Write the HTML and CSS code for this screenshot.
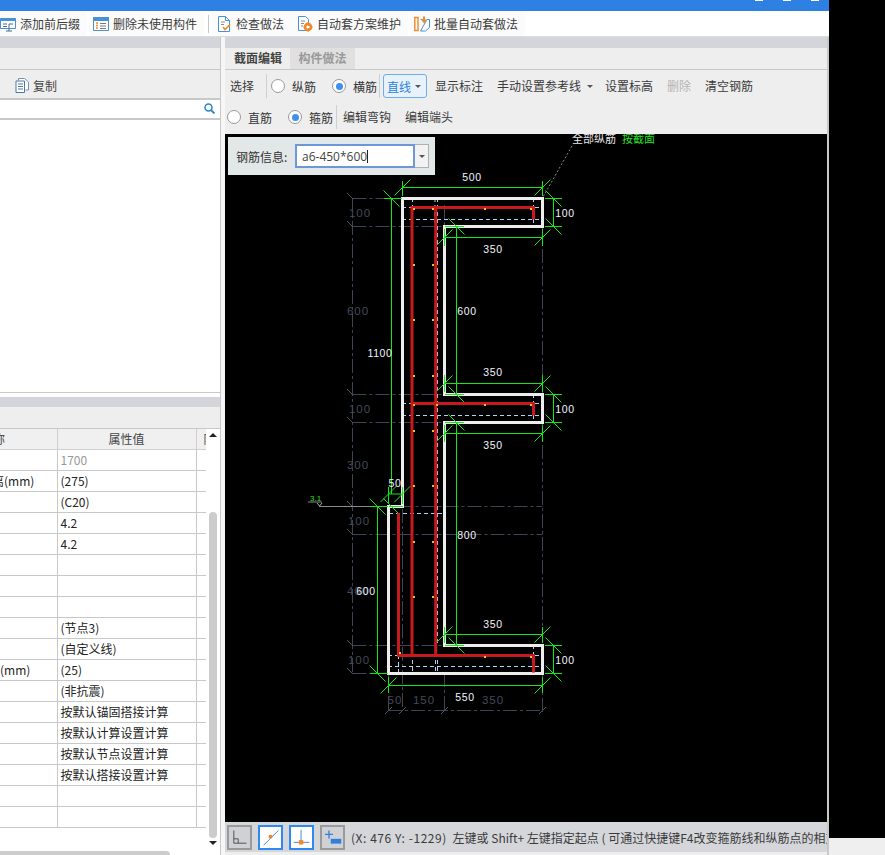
FILE: index.html
```html
<!DOCTYPE html>
<html lang="zh">
<head>
<meta charset="utf-8">
<title>截面编辑</title>
<link rel="stylesheet" href="styles.css">
</head>
<body>
<div class="page">
<div class="app">
  <div class="titlebar"><i class="ctl"></i><i class="ctl"></i><i class="ctl"></i></div>
  <div class="toolbar">
    <div class="tool first">
      <svg class="ti" viewBox="0 0 16 16"><path d="M.5 2.500h15v10H.5z" fill="#fff" stroke="#4a90d9"/><path d="M.5 2h15v3H.5z" fill="#4a90d9"/><path d="M3 8h4M3 10.500h4M9 8h4M9 8v7M6 15h6" fill="none" stroke="#4a6a8a"/></svg>
      <span>添加前后缀</span>
    </div>
    <div class="tool">
      <svg class="ti" viewBox="0 0 16 16"><path d="M.5 1.500h15v13H.5z" fill="#fff" stroke="#4a90d9"/><path d="M0 1h16v4H0z" fill="#4a90d9"/><path d="M3 7h2M3 9.500h2M3 12h2" stroke="#ee8a2a" stroke-width="1.500"/><path d="M7 7.500h6M7 10h6M7 12.500h6" stroke="#778"/></svg>
      <span>删除未使用构件</span>
    </div>
    <i class="vsep"></i>
    <div class="tool narrow">
      <svg class="ti" viewBox="0 0 16 16"><path d="M2.500.5h7l4 4v11h-11z" fill="#fff" stroke="#4a90d9"/><path d="M9.500.5v4h4" fill="none" stroke="#4a90d9"/><path d="M5 6h4M5 8.500h3" stroke="#889"/><path d="M7 11l2 2.500 5-5" fill="none" stroke="#ee8a2a" stroke-width="1.600"/></svg>
      <span>检查做法</span>
    </div>
    <div class="tool">
      <svg class="ti" viewBox="0 0 16 16"><path d="M1.500.5h7l3 3v11h-10z" fill="#fff" stroke="#4a90d9"/><path d="M4 5h4M4 7.500h3M4 10h2" stroke="#889"/><circle cx="11" cy="11" r="3.200" fill="none" stroke="#ee8a2a" stroke-width="2.400"/><path d="M11 6.500v9M6.500 11h9M8 8l6 6M14 8l-6 6" stroke="#ee8a2a" stroke-width="1"/><circle cx="11" cy="11" r="1.300" fill="#fff"/></svg>
      <span>自动套方案维护</span>
    </div>
    <div class="tool gapped">
      <svg class="ti" viewBox="0 0 16 16"><path d="M4 1.500H.8v13H4M4 .8v14.500" fill="none" stroke="#ee8a2a" stroke-width="1.400"/><path d="M6.500 3.500h2M13 3.500h2.500v8l-4 3.500h-5z" fill="#fff" stroke="#4a90d9"/><path d="M9 .5h2v3h2l-3 4-3-4h2z" fill="#ee8a2a"/></svg>
      <span>批量自动套做法</span>
    </div>
  </div>
  <div class="main">
    <div class="left">
      <div class="band"></div>
      <div class="lhead"></div>
      <div class="lcopy">
        <svg class="copy-i" viewBox="0 0 14 15"><path d="M3.500 2.500V.5h6l4 3.500v8h-3" fill="#fff" stroke="#7a93ad"/><path d="M1 3h8.500v11.500H1z" fill="#fff" stroke="#4a78a8"/><path d="M3 6h5M3 8.500h5M3 11h5" stroke="#4a78a8"/></svg>
        <span>复制</span>
      </div>
      <div class="search">
        <svg class="search-i" viewBox="0 0 11 11"><circle cx="4.500" cy="4.500" r="3.500" fill="none" stroke="#2a85c8" stroke-width="1.500"/><path d="M7 7l3.500 3.500" stroke="#2a85c8" stroke-width="1.800"/></svg>
      </div>
      <div class="list"></div>
      <div class="band low"></div>
      <div class="lhead short"></div>
      <div class="props">
        <div class="tbl-view">
          <table class="tbl">
            <colgroup><col class="c1"><col class="c2"><col class="c3"></colgroup>
            <thead><tr><th class="h">属性名称</th><th>属性值</th><th class="extra">附加</th></tr></thead>
            <tbody>
              <tr><td></td><td class="muted">1700</td><td></td></tr>
              <tr><td class="nm cut">离(mm)</td><td>(275)</td><td></td></tr>
              <tr><td></td><td>(C20)</td><td></td></tr>
              <tr><td></td><td>4.2</td><td></td></tr>
              <tr><td></td><td>4.2</td><td></td></tr>
              <tr><td></td><td></td><td></td></tr>
              <tr><td></td><td></td><td></td></tr>
              <tr><td></td><td></td><td></td></tr>
              <tr><td></td><td>(节点3)</td><td></td></tr>
              <tr><td></td><td>(自定义线)</td><td></td></tr>
              <tr><td class="nm">(mm)</td><td>(25)</td><td></td></tr>
              <tr><td></td><td>(非抗震)</td><td></td></tr>
              <tr><td></td><td>按默认锚固搭接计算</td><td></td></tr>
              <tr><td></td><td>按默认计算设置计算</td><td></td></tr>
              <tr><td></td><td>按默认节点设置计算</td><td></td></tr>
              <tr><td></td><td>按默认搭接设置计算</td><td></td></tr>
              <tr><td></td><td></td><td></td></tr>
              <tr><td></td><td></td><td></td></tr>
            </tbody>
          </table>
          <div class="hscroll"></div>
        </div>
        <div class="vscroll">
          <i class="arrow up"></i>
          <div class="thumb"></div>
          <i class="arrow down"></i>
        </div>
      </div>
    </div>
    <div class="gutter"></div>
    <div class="right">
      <div class="band"></div>
      <div class="tabs">
        <div class="tab on">截面编辑</div>
        <div class="tab">构件做法</div>
      </div>
      <div class="row r1">
        <span class="txt">选择</span>
        <i class="sep s1"></i>
        <label class="opt o1"><i class="radio"></i><span>纵筋</span></label>
        <label class="opt o2"><i class="radio sel"></i><span>横筋</span></label>
        <i class="sep s2"></i>
        <div class="linebtn"><span>直线</span><i class="caret"></i></div>
        <span class="txt m8">显示标注</span>
        <span class="txt m14">手动设置参考线</span><i class="caret c5"></i>
        <span class="txt m12">设置标高</span>
        <span class="txt m14 off">删除</span>
        <span class="txt m14">清空钢筋</span>
      </div>
      <div class="row r2">
        <label class="opt"><i class="radio"></i><span>直筋</span></label>
        <label class="opt o3"><i class="radio sel"></i><span>箍筋</span></label>
        <i class="sep s3"></i>
        <span class="txt m6">编辑弯钩</span>
        <span class="txt m14">编辑端头</span>
      </div>
      <div class="canvas">
        <svg class="draw" viewBox="225 134 602 688" width="602" height="688">
          <defs>
            <path id="ts" d="M-8 8L8-8"/>
            <path id="tb" d="M-8-8L8 8"/>
            <path id="ty" d="M0 0h2v2H0z"/>
          </defs>
          <g class="dim">
            <path d="M352.500 198V673M352.500 198.500H402M352.500 226.500H444M352.500 394.500H444M352.500 422.500H444M352.500 506.500H542.500M352.500 534.500H542.500M352.500 645.500H444M352.500 673.500H388M542.500 226V394M542.500 422V713M402.500 509V711M444.500 673V713M388.500 673V713M388 710.500H543M444.500 205V226M444.500 422V645"/>
            <path class="dtick" d="M347 193l6 6M347 221l6 6M347 389l6 6M347 417l6 6M347 501l6 6M347 529l6 6M347 640l6 6M347 668l6 6M385 714l7-7M399 714l7-7M441 714l7-7M539 714l7-7"/>
          </g>
          <g class="dimt">
            <text x="360" y="217" text-anchor="middle">100</text>
            <text x="358" y="315" text-anchor="middle">600</text>
            <text x="360" y="413" text-anchor="middle">100</text>
            <text x="358" y="469" text-anchor="middle">300</text>
            <text x="359" y="525" text-anchor="middle">100</text>
            <text x="358" y="595" text-anchor="middle">400</text>
            <text x="359" y="664" text-anchor="middle">100</text>
            <text x="395" y="704" text-anchor="middle">50</text>
            <text x="424" y="704" text-anchor="middle">150</text>
            <text x="493" y="704" text-anchor="middle">350</text>
          </g>
          <g class="blue">
            <path d="M402 207.500H542M402 219.500H542M402 403.500H542M402 415.500H542M389 513.500H445M388 655.500H542M388 666.500H542M412.500 198V207M437.500 198V645M435 198V226M533.500 198V207M533.500 219V226M533.500 394V403M533.500 415V422M398.500 655V673M412.500 660V673M435.500 660V673M437.500 660V673M533.500 645V655"/>
          </g>
          <path class="leader" d="M572 146L543 197"/>
          <path class="lev" d="M319 506.500H389M308 502H322"/>
          <path class="levm" d="M317 503l2.500 3 2.500-3"/>
          <path class="wall" d="M402.500 198.500H542.500V226.500H444.500V394.500H542.500V422.500H444.500V645.500H542.500V673.500H388.500V506.500H402.500Z"/>
          <g class="green">
            <path d="M402.500 187.500H542.500M402.500 181V196M542.500 181V196M391.500 198V494M384 198.500H402M553.500 198.500V226.500M545 198.500H562M545 226.500H562M444.500 237.500H542.500M444.500 229V246M542.500 229V246M456.500 226V394M445 226.500H464M445 394.500H464M444.500 383.500H542.500M444.500 375V392M542.500 375V392M553.500 394.500V422.500M545 394.500H562M545 422.500H562M444.500 433.500H542.500M444.500 425V442M542.500 425V442M456.500 422V645M445 422.500H464M445 645.500H464M444.500 634.500H542.500M444.500 627V643M542.500 627V643M388.500 494H402.500M388.500 487V504M402.500 487V504M389 506.500H403M377.500 506.500V673.500M370 506.500H388M370 673.500H388M553.500 645.500V673.500M545 645.500H562M545 673.500H562M388.500 685.500H542.500M388.500 677V693M542.500 677V693"/>
            <use href="#ts" x="402.500" y="187.500"/><use href="#ts" x="542.500" y="187.500"/>
            <use href="#tb" x="391.500" y="198.500"/>
            <use href="#tb" x="553.500" y="198.500"/><use href="#tb" x="553.500" y="226.500"/>
            <use href="#ts" x="444.500" y="237.500"/><use href="#ts" x="542.500" y="237.500"/>
            <use href="#tb" x="456.500" y="226.500"/><use href="#tb" x="456.500" y="394.500"/>
            <use href="#ts" x="444.500" y="383.500"/><use href="#ts" x="542.500" y="383.500"/>
            <use href="#tb" x="553.500" y="394.500"/><use href="#tb" x="553.500" y="422.500"/>
            <use href="#ts" x="444.500" y="433.500"/><use href="#ts" x="542.500" y="433.500"/>
            <use href="#tb" x="456.500" y="422.500"/><use href="#tb" x="456.500" y="645.500"/>
            <use href="#ts" x="444.500" y="634.500"/><use href="#ts" x="542.500" y="634.500"/>
            <use href="#ts" x="388.500" y="494"/><use href="#ts" x="402.500" y="494"/>
            <use href="#tb" x="391.500" y="506.500"/>
            <use href="#tb" x="377.500" y="506.500"/><use href="#tb" x="377.500" y="673.500"/>
            <use href="#tb" x="553.500" y="645.500"/><use href="#tb" x="553.500" y="673.500"/>
            <use href="#ts" x="388.500" y="685.500"/><use href="#ts" x="542.500" y="685.500"/>
          </g>
          <path class="rebar" d="M412 655.500V207.500H533.500V219.500M435.700 207.500V655.500M412 403.500H533.500V415.500M398.500 513V655.500H533.500V672.500"/>
          <g class="yel">
            <use href="#ty" x="413" y="208"/><use href="#ty" x="432" y="208"/><use href="#ty" x="484" y="208"/><use href="#ty" x="530" y="208"/>
            <use href="#ty" x="413" y="264"/><use href="#ty" x="432" y="264"/>
            <use href="#ty" x="413" y="319"/><use href="#ty" x="432" y="319"/>
            <use href="#ty" x="413" y="375"/><use href="#ty" x="432" y="375"/>
            <use href="#ty" x="413" y="404"/><use href="#ty" x="436" y="404"/><use href="#ty" x="484" y="404"/><use href="#ty" x="530" y="404"/>
            <use href="#ty" x="413" y="430"/><use href="#ty" x="432" y="430"/>
            <use href="#ty" x="413" y="485"/><use href="#ty" x="432" y="485"/>
            <use href="#ty" x="413" y="541"/><use href="#ty" x="432" y="541"/>
            <use href="#ty" x="413" y="596"/><use href="#ty" x="432" y="596"/>
            <use href="#ty" x="399" y="652"/><use href="#ty" x="484" y="656"/><use href="#ty" x="530" y="656"/>
          </g>
          <g class="lbl">
            <text x="472" y="181" text-anchor="middle">500</text>
            <text x="565" y="217" text-anchor="middle">100</text>
            <text x="493" y="253" text-anchor="middle">350</text>
            <text x="467" y="315" text-anchor="middle">600</text>
            <text x="380" y="357" text-anchor="middle">1100</text>
            <text x="493" y="376" text-anchor="middle">350</text>
            <text x="565" y="413" text-anchor="middle">100</text>
            <text x="493" y="449" text-anchor="middle">350</text>
            <text x="395" y="487" text-anchor="middle">50</text>
            <text x="467" y="539" text-anchor="middle">800</text>
            <text x="366" y="595" text-anchor="middle">600</text>
            <text x="493" y="628" text-anchor="middle">350</text>
            <text x="565" y="664" text-anchor="middle">100</text>
            <text x="465" y="701" text-anchor="middle">550</text>
          </g>
          <text class="cn white" x="572" y="143">全部纵筋</text>
          <text class="cn lime" x="622" y="143">按截面</text>
          <text class="lvlt" x="310" y="501">3.1</text>
        </svg>
        <div class="info">
          <span class="info-l">钢筋信息:</span>
          <div class="combo">
            <div class="field">a6-450*600<i class="cursor"></i></div>
            <div class="drop"><i class="caret"></i></div>
          </div>
        </div>
      </div>
      <div class="status">
        <div class="sbtn">
          <svg viewBox="0 0 24 24"><path d="M5.500 4V18.500H20M5.500 13.500H10.500V18.500" fill="none" stroke="#444"/></svg>
        </div>
        <div class="sbtn act">
          <svg viewBox="0 0 24 24"><path d="M4 21L21 4" stroke="#3a7cc8"/><path d="M10 13h4v-4h-4z" fill="#ee8a2a"/></svg>
        </div>
        <div class="sbtn act">
          <svg viewBox="0 0 24 24"><path d="M11.500 3V17M3 17.500H21" stroke="#3a7cc8"/><path d="M9 15h5v5H9z" fill="#ee8a2a"/></svg>
        </div>
        <div class="sbtn">
          <svg viewBox="0 0 24 24"><path d="M8 4V13M3.500 8.500H12.500" stroke="#2e80d8" stroke-width="1.500"/><path d="M10 13.500H22V19H10z" fill="#2e80d8"/></svg>
        </div>
        <span class="stext"><span class="coord">(X: 476 Y: -1229)</span> 左键或 Shift+ 左键指定起点 ( 可通过快捷键F4改变箍筋线和纵筋点的相对位置 )</span>
      </div>
    </div>
  </div>
</div>
<div class="outside">
  <div class="black"></div>
  <div class="corner"></div>
</div>
</div>
</body>
</html>
```
FILE: styles.css
```css
* { box-sizing: border-box; }
html, body { margin: 0; padding: 0; background: #000; }
body {
  width: 885px;
  height: 855px;
  overflow: hidden;
  font-family: "Noto Sans CJK SC", "Liberation Sans", sans-serif;
  font-size: 12px;
  color: #333;
}
i { display: block; font-style: normal; }
.page { display: flex; width: 885px; height: 855px; }
.app { width: 829px; height: 855px; display: flex; flex-direction: column; background: #fff; overflow: hidden; flex: none; }
.outside { flex: 1; display: flex; flex-direction: column; }
.black { flex: 1; background: #000; }
.corner { height: 17px; background: #efefef; }

.titlebar { height: 11px; background: #2e80e2; display: flex; justify-content: flex-end; gap: 20px; padding-right: 10px; flex: none; }
.ctl { width: 8px; height: 1px; background: #fff; }

.toolbar { height: 26px; flex: none; display: flex; align-items: center; background: #fff; margin-left: -4px; border-bottom: 1px solid #dcdcdc; }
.tool { height: 24px; display: flex; align-items: center; gap: 4px; padding: 0 7px 0 4px; background: #fbfbfb; border-radius: 3px; color: #3c3c3c; line-height: 16px; white-space: nowrap; }
.tool.first { margin-right: 2px; }
.tool.narrow { padding-right: 9px; }
.tool.gapped { margin-left: 2px; }
.ti { width: 16px; height: 16px; flex: none; }
.vsep { width: 1px; height: 18px; background: #c8c8c8; margin: 0 3px 0 4px; }

.main { flex: 1; display: flex; min-height: 0; }
.left { width: 221px; flex: none; display: flex; flex-direction: column; border-right: 1px solid #c8c8c8; }
.gutter { width: 4px; flex: none; background: #f6f6f6; }
.right { width: 604px; flex: none; display: flex; flex-direction: column; background: #eeeeee; border-right: 2px solid #c8c8c8; }
.band { height: 11px; flex: none; background: #d4d5da; }
.band.low { height: 10px; margin-top: 4px; }

.lhead { height: 22px; flex: none; background: #eeeeee; border-bottom: 1px solid #c8c8c8; }
.lhead.short { height: 22px; }
.lcopy { height: 30px; flex: none; background: #eeeeee; border-bottom: 2px solid #c8c8c8; display: flex; align-items: center; padding: 2px 0 0 15px; gap: 4px; color: #444; }
.copy-i { width: 14px; height: 15px; }
.search { height: 20px; flex: none; background: #fff; border-bottom: 2px solid #c8c8c8; display: flex; align-items: center; justify-content: flex-end; padding: 0 5px 2px 0; }
.search-i { width: 11px; height: 11px; }
.list { flex: none; height: 273px; background: #fff; border-bottom: 1px solid #c8c8c8; }

.props { flex: 1; display: flex; min-height: 0; background: #fff; }
.tbl-view { width: 206px; flex: none; display: flex; flex-direction: column; justify-content: space-between; }
.tbl { width: 206px; table-layout: fixed; border-collapse: collapse; }
.c1 { width: 57px; }
.c2 { width: 139px; }
.c3 { width: 10px; }
.tbl th { height: 20px; padding: 0; font-weight: 400; background: #f0f0f0; color: #444; border-right: 1px solid #cfcfcf; border-bottom: 1px solid #cfcfcf; overflow: hidden; white-space: nowrap; line-height: 19px; }
.tbl td { height: 21px; padding: 0 0 0 3px; border-right: 1px solid #c8c8c8; border-bottom: 1px solid #c8c8c8; color: #222; overflow: hidden; white-space: nowrap; line-height: 20px; }
.tbl td:last-child, .tbl th:last-child { border-right: 0; }
.tbl td.nm { padding-left: 0; }
.tbl td.cut { text-indent: -8px; }
.tbl th.h { text-align: left; text-indent: -43px; }
.tbl th.extra { text-align: left; padding-left: 7px; }
.tbl .muted { color: #999; }
.hscroll { width: 170px; height: 4px; background: #cccccc; border-radius: 0 4px 0 0; }
.vscroll { width: 14px; flex: none; display: flex; flex-direction: column; align-items: center; padding-top: 4px; }
.arrow { width: 0; height: 0; border-left: 4px solid transparent; border-right: 4px solid transparent; }
.arrow.up { border-bottom: 4px solid #222; }
.arrow.down { border-top: 4px solid #222; margin-top: 3px; }
.thumb { width: 8px; height: 326px; background: #cccccc; border-radius: 4px; margin-top: 75px; }

.tabs { height: 22px; flex: none; display: flex; padding-left: 1px; border-bottom: 1px solid #c8c8c8; }
.tab { width: 65px; height: 21px; text-align: center; line-height: 20px; font-weight: 700; background: #e0e0e0; color: #999; }
.tab.on { width: 64px; background: #eeeeee; color: #444; }

.row { flex: none; display: flex; align-items: center; color: #3a3a3a; white-space: nowrap; }
.r1 { height: 32px; padding-left: 5px; }
.r2 { height: 32px; padding: 0 0 2px 2px; }
.txt { line-height: 16px; }
.off { color: #b5b5b5; }
.m6 { margin-left: 6px; }
.m8 { margin-left: 8px; }
.m12 { margin-left: 12px; }
.m14 { margin-left: 14px; }
.sep { width: 1px; height: 24px; background: #cfcfcf; }
.s1 { margin-left: 12px; }
.s2 { margin-left: 2px; }
.s3 { margin-left: 3px; }
.opt { display: flex; align-items: center; gap: 7px; color: #333; }
.o1 { margin-left: 4px; }
.o2 { margin-left: 16px; }
.o3 { margin-left: 16px; }
.radio { width: 14px; height: 14px; border: 1px solid #999; border-radius: 50%; background: #fff; display: flex; align-items: center; justify-content: center; }
.radio.sel::after { content: ""; width: 7px; height: 7px; border-radius: 50%; background: #3d8ff0; }
.linebtn { width: 44px; height: 24px; margin-left: 3px; border: 1px solid #6aaef0; border-radius: 3px; background: #e8f2fc; color: #2a80e0; display: flex; align-items: center; justify-content: space-between; padding: 0 5px 0 3px; }
.caret { width: 0; height: 0; border-left: 3px solid transparent; border-right: 3px solid transparent; border-top: 3px solid #555; }
.c5 { margin-left: 6px; }

.canvas { position: relative; flex: 1; min-height: 0; background: #000; overflow: hidden; }
.draw { display: block; }
.dim path { fill: none; stroke: #3e4454; stroke-width: 1; stroke-dasharray: 14 3 3 3; }
.dim .dtick { stroke-dasharray: none; stroke: #4c5262; }
.dimt text { font: 11.500px "Liberation Sans", sans-serif; letter-spacing: 1px; fill: #444a58; }
.blue path { fill: none; stroke: #b4d2f4; stroke-width: 1; stroke-dasharray: 4 3; }
.leader { fill: none; stroke: #888; stroke-dasharray: 2 2; }
.lev { fill: none; stroke: #8a8a8a; }
.levm { fill: none; stroke: #aaa; }
.wall { fill: none; stroke: #eeeeee; stroke-width: 3; }
.green path { fill: none; stroke: #14e814; stroke-width: 1; }
.green use { fill: none; stroke: #14e814; stroke-width: 1; }
.rebar { fill: none; stroke: #c8191e; stroke-width: 3; }
.yel use { fill: #f0c020; }
.lbl text { font: 10.500px "Liberation Sans", sans-serif; letter-spacing: .6px; fill: #f2f6ff; }
.cn { font: 11px "Noto Sans CJK SC", sans-serif; }
.white { fill: #e8e8e8; }
.lime { fill: #28e028; }
.lvlt { font: 8px "Liberation Sans", sans-serif; fill: #28e028; }

.info { position: absolute; left: 3px; top: 3px; width: 207px; height: 38px; background: #e2e7e8; display: flex; align-items: center; padding-left: 8px; gap: 7px; color: #333; }
.info-l { width: 52px; white-space: nowrap; }
.combo { display: flex; height: 24px; width: 134px; }
.field { width: 120px; height: 24px; background: #fff; border: 2px solid #6f97d8; padding-left: 5px; display: flex; align-items: center; color: #444; font-family: "Open Sans", sans-serif; }
.cursor { width: 1px; height: 13px; background: #222; }
.drop { width: 14px; height: 24px; background: #f2f2f2; border: 1px solid #b0b0b0; border-left: 0; display: flex; align-items: center; justify-content: center; }

.status { height: 33px; flex: none; background: #d5d6da; display: flex; align-items: flex-start; padding: 3px 0 0 2px; gap: 6px; overflow: hidden; white-space: nowrap; border-bottom: 3px solid #eeeeee; }
.sbtn { width: 25px; height: 25px; flex: none; border: 2px solid #9a9a9a; background: #d0d1d5; }
.sbtn svg { display: block; width: 21px; height: 21px; }
.sbtn.act { border-color: #2e8af0; background: #fff; }
.stext { line-height: 25px; color: #3a3a3a; }
.coord { letter-spacing: .55px; margin-right: 3px; }
```
